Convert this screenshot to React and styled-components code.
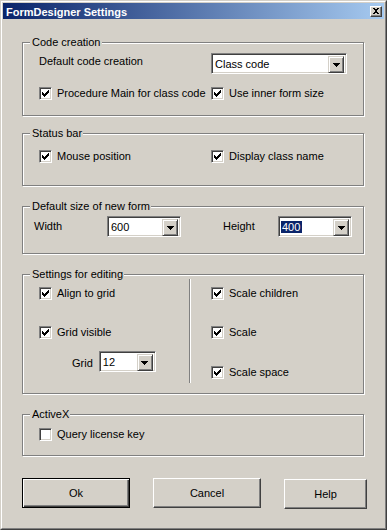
import styled, { createGlobalStyle, css } from 'styled-components';

const GlobalStyle = createGlobalStyle`
  html, body {
    margin: 0;
    padding: 0;
    background: #d4d0c8;
  }
  body {
    font-family: "Liberation Sans", Arial, sans-serif;
    font-size: 11px;
    color: #000;
  }
`;

const Window = styled.div`
  box-sizing: border-box;
  width: 387px;
  height: 530px;
  display: flex;
  background: #d4d0c8;
  border: 1px solid;
  border-color: #d4d0c8 #404040 #404040 #d4d0c8;
`;

const Frame = styled.div`
  flex: 1;
  display: flex;
  flex-direction: column;
  padding: 1px;
  border: 1px solid;
  border-color: #fff #808080 #808080 #fff;
`;

const TitleBar = styled.div`
  height: 16px;
  display: flex;
  align-items: center;
  justify-content: space-between;
  padding: 0 2px 0 3px;
  background: linear-gradient(to right, #0a246a, #a6caf0);
`;

const Title = styled.span`
  padding-top: 2px;
  color: #fff;
  font-weight: bold;
  font-size: 11px;
  white-space: nowrap;
`;

const CloseButton = styled.div`
  box-sizing: border-box;
  width: 12px;
  height: 11px;
  display: flex;
  align-items: center;
  justify-content: center;
  background: #d4d0c8;
  border: 1px solid;
  border-color: #fff #404040 #404040 #fff;
  box-shadow: inset -1px -1px 0 #808080;
`;

const Content = styled.div`
  flex: 1;
  display: flex;
  flex-direction: column;
  padding-left: 19px;
`;

const Group = styled.div`
  box-sizing: border-box;
  width: 342px;
  height: ${p => p.$h}px;
  margin-top: ${p => p.$mt}px;
  display: flex;
  flex-direction: column;
  border: 1px solid #808080;
  box-shadow: 1px 1px 0 #fff, inset 1px 1px 0 #fff;
`;

const Legend = styled.div`
  align-self: flex-start;
  height: 13px;
  line-height: 13px;
  margin: -7px 0 0 7px;
  padding: 0 1px 0 2px;
  background: #d4d0c8;
  white-space: nowrap;
`;

const TwoCol = styled.div`
  display: grid;
  grid-template-columns: 172px auto;
  row-gap: ${p => p.$gap || 0}px;
  align-items: center;
  margin-top: ${p => p.$mt}px;
  padding-left: 16px;
`;

const Label = styled.span`
  align-self: ${p => (p.$top ? 'start' : 'center')};
  padding-top: ${p => (p.$top ? 2 : 0)}px;
  line-height: 13px;
  white-space: nowrap;
`;

const FieldRow = styled.div`
  display: flex;
  align-items: center;
  margin-top: ${p => p.$mt}px;
  padding-left: 11px;
`;

const FieldLabel = styled.span`
  width: ${p => p.$w}px;
  margin-left: ${p => p.$ml || 0}px;
  line-height: 13px;
  white-space: nowrap;
`;

const Split = styled.div`
  display: flex;
  height: 104px;
  margin-top: -2px;
  padding-left: 16px;
`;

const Column = styled.div`
  width: ${p => (p.$w ? `${p.$w}px` : 'auto')};
  flex: ${p => (p.$w ? 'none' : '1')};
  display: flex;
  flex-direction: column;
  padding: 8px 0 0 ${p => p.$pl || 0}px;
`;

const Separator = styled.div`
  width: 0;
  border-left: 1px solid #808080;
  border-right: 1px solid #fff;
`;

const GridRow = styled.div`
  display: flex;
  align-items: flex-start;
  gap: 6px;
  margin-top: 12px;
  padding-left: 33px;
`;

const GridLabel = styled.span`
  margin-top: 6px;
  line-height: 13px;
`;

const CheckRow = styled.label`
  display: flex;
  align-items: center;
  gap: 5px;
  height: 13px;
  line-height: 13px;
  margin-top: ${p => p.$mt || 0}px;
  padding-left: ${p => p.$pl || 0}px;
  white-space: nowrap;
`;

const Box = styled.span`
  box-sizing: border-box;
  flex: none;
  width: 13px;
  height: 13px;
  display: flex;
  align-items: center;
  justify-content: center;
  background: #fff;
  border: 1px solid;
  border-color: #808080 #fff #fff #808080;
  box-shadow: inset 1px 1px 0 #404040, inset -1px -1px 0 #d4d0c8;
`;

const ComboBox = styled.div`
  box-sizing: border-box;
  width: ${p => p.$w}px;
  height: 21px;
  flex: none;
  display: flex;
  padding: 2px;
  background: #fff;
  border: 1px solid;
  border-color: #808080 #fff #fff #808080;
  box-shadow: inset 1px 1px 0 #404040, inset -1px -1px 0 #d4d0c8;
`;

const ComboText = styled.div`
  flex: 1;
  display: flex;
  align-items: center;
`;

const Value = styled.span`
  padding: 0 2px 0 1px;
  line-height: 12px;
  white-space: nowrap;
  ${p => p.$selected && css`
    background: #0a246a;
    color: #fff;
  `}
`;

const DropButton = styled.div`
  box-sizing: border-box;
  width: 16px;
  height: 17px;
  display: flex;
  align-items: center;
  justify-content: center;
  background: #d4d0c8;
  border: 1px solid;
  border-color: #d4d0c8 #404040 #404040 #d4d0c8;
  box-shadow: inset 1px 1px 0 #fff, inset -1px -1px 0 #808080;
`;

const ButtonRow = styled.div`
  display: flex;
  align-items: flex-start;
  gap: 23px;
  margin-top: 22px;
`;

const Button = styled.button`
  box-sizing: border-box;
  width: ${p => p.$w}px;
  height: 30px;
  margin-top: ${p => p.$mt || 0}px;
  padding: 0;
  background: #d4d0c8;
  color: #000;
  font: 11px "Liberation Sans", Arial, sans-serif;
  border: 1px solid;
  border-color: #fff #404040 #404040 #fff;
  box-shadow: inset -1px -1px 0 #808080;
  ${p => p.$default && css`
    border-color: #000;
    box-shadow: inset 1px 1px 0 #fff, inset -1px -1px 0 #404040, inset -2px -2px 0 #808080;
  `}
`;

const CheckMark = () => (
  <svg width="7" height="7" viewBox="0 0 7 7" shapeRendering="crispEdges">
    <path
      fill="#000"
      d="M6 0h1v1h-1zM5 1h2v1h-2zM0 2h1v1h-1zM4 2h3v1h-3zM0 3h2v1h-2zM3 3h3v1h-3zM0 4h5v1h-5zM1 5h3v1h-3zM2 6h1v1h-1z"
    />
  </svg>
);

const Arrow = () => (
  <svg width="7" height="4" viewBox="0 0 7 4" shapeRendering="crispEdges">
    <path fill="#000" d="M0 0h7v1h-7zM1 1h5v1h-5zM2 2h3v1h-3zM3 3h1v1h-1z" />
  </svg>
);

const CloseGlyph = () => (
  <svg width="6" height="6" viewBox="0 0 6 6" shapeRendering="crispEdges">
    <path
      fill="#000"
      d="M0 0h2v1h-2zM4 0h2v1h-2zM1 1h4v1h-4zM2 2h2v2h-2zM1 4h4v1h-4zM0 5h2v1h-2zM4 5h2v1h-2z"
    />
  </svg>
);

function Check({ label, checked = true, mt, pl }) {
  return (
    <CheckRow $mt={mt} $pl={pl}>
      <Box>{checked && <CheckMark />}</Box>
      {label}
    </CheckRow>
  );
}

function Combo({ value, width, selected }) {
  return (
    <ComboBox $w={width}>
      <ComboText>
        <Value $selected={selected}>{value}</Value>
      </ComboText>
      <DropButton>
        <Arrow />
      </DropButton>
    </ComboBox>
  );
}

export default function App() {
  return (
    <>
      <GlobalStyle />
      <Window>
        <Frame>
          <TitleBar>
            <Title>FormDesigner Settings</Title>
            <CloseButton>
              <CloseGlyph />
            </CloseButton>
          </TitleBar>

          <Content>
            <Group $h={74} $mt={23}>
              <Legend>Code creation</Legend>
              <TwoCol $mt={4} $gap={13}>
                <Label $top>Default code creation</Label>
                <Combo value="Class code" width={136} />
                <Check label="Procedure Main for class code" />
                <Check label="Use inner form size" />
              </TwoCol>
            </Group>

            <Group $h={53} $mt={17}>
              <Legend>Status bar</Legend>
              <TwoCol $mt={10}>
                <Check label="Mouse position" />
                <Check label="Display class name" />
              </TwoCol>
            </Group>

            <Group $h={48} $mt={20}>
              <Legend>Default size of new form</Legend>
              <FieldRow $mt={3}>
                <FieldLabel $w={73}>Width</FieldLabel>
                <Combo value="600" width={74} />
                <FieldLabel $w={55} $ml={42}>Height</FieldLabel>
                <Combo value="400" width={74} selected />
              </FieldRow>
            </Group>

            <Group $h={120} $mt={20}>
              <Legend>Settings for editing</Legend>
              <Split>
                <Column $w={150}>
                  <Check label="Align to grid" />
                  <Check label="Grid visible" mt={26} />
                  <GridRow>
                    <GridLabel>Grid</GridLabel>
                    <Combo value="12" width={57} />
                  </GridRow>
                </Column>
                <Separator />
                <Column $pl={20}>
                  <Check label="Scale children" />
                  <Check label="Scale" mt={26} />
                  <Check label="Scale space" mt={27} />
                </Column>
              </Split>
            </Group>

            <Group $h={42} $mt={20}>
              <Legend>ActiveX</Legend>
              <TwoCol $mt={7}>
                <Check label="Query license key" checked={false} />
              </TwoCol>
            </Group>

            <ButtonRow>
              <Button $w={108} $default>Ok</Button>
              <Button $w={108}>Cancel</Button>
              <Button $w={83} $mt={1}>Help</Button>
            </ButtonRow>
          </Content>
        </Frame>
      </Window>
    </>
  );
}
